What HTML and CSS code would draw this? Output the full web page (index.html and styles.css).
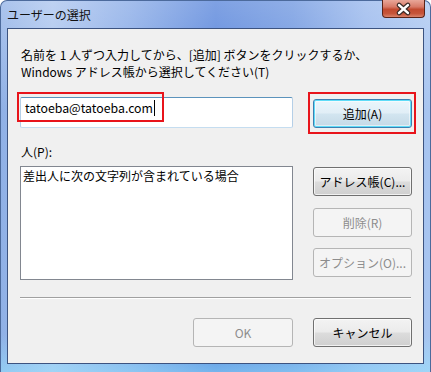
FILE: index.html
```html
<!DOCTYPE html>
<html lang="ja">
<head>
  <meta charset="UTF-8">
  <title>ユーザーの選択</title>
  <link rel="stylesheet" href="styles.css">
</head>
<body>
  <div class="window">
    <div class="titlebar">
      <span class="title">ユーザーの選択</span>
      <button class="close" aria-label="閉じる">
        <svg width="42" height="18" viewBox="0 0 42 18">
          <path d="M16.5 5 L25.5 13 M25.5 5 L16.5 13" stroke="#3b2a26" stroke-width="5" stroke-linecap="round"/>
          <path d="M16.5 5 L25.5 13 M25.5 5 L16.5 13" stroke="#fff" stroke-width="2.6" stroke-linecap="round"/>
        </svg>
      </button>
    </div>

    <div class="client">
      <p class="prompt">名前を 1 人ずつ入力してから、[追加] ボタンをクリックするか、<br>Windows アドレス帳から選択してください(T)</p>

      <div class="grid add-row">
        <div class="textbox">tatoeba@tatoeba.com<span class="caret"></span><span class="mark mark-input"></span></div>
        <button class="btn btn-default">追加(A)<span class="mark mark-btn"></span></button>
      </div>

      <label class="field-label">人(P):</label>

      <div class="grid list-row">
        <div class="listbox">差出人に次の文字列が含まれている場合</div>
        <div class="side-buttons">
          <button class="btn">アドレス帳(C)...</button>
          <button class="btn" disabled>削除(R)</button>
          <button class="btn" disabled>オプション(O)...</button>
        </div>
      </div>

      <div class="separator"></div>

      <div class="grid footer">
        <button class="btn btn-ok" disabled>OK</button>
        <button class="btn">キャンセル</button>
      </div>
    </div>
  </div>
</body>
</html>
```

FILE: styles.css
```css
* { box-sizing: border-box; margin: 0; padding: 0; }
body {
  width: 431px;
  height: 372px;
  overflow: hidden;
  font-family: "Noto Sans CJK JP", "Noto Sans", sans-serif;
  font-size: 12px;
  color: #000;
  background: #fff;
}
.window {
  height: 372px;
  display: flex;
  flex-direction: column;
  padding: 0 6px 8px 6px;
  border-radius: 7px 7px 0 0;
  border: 1px solid #4c6a9c;
  border-bottom: none;
  background:
    linear-gradient(180deg, rgba(255,255,255,0.25) 0%, rgba(255,255,255,0) 30%, rgba(255,255,255,0) 90%, rgba(150,230,255,0.5) 100%),
    linear-gradient(90deg, #8fb0e6 0%, #a9c3ee 12%, #85a8e6 30%, #5482da 50%, #6b94df 68%, #95b5ec 85%, #a8c5f0 100%);
}
.titlebar {
  height: 27px;
  display: flex;
  align-items: flex-start;
  justify-content: space-between;
}
.title {
  margin: 7px 0 0 0;
  line-height: 14px;
  font-size: 12px;
  color: #111;
}
.close {
  width: 43px;
  height: 18px;
  margin-top: -1px;
  margin-right: -1px;
  border: 1px solid #5a2318;
  border-top: none;
  border-radius: 0 0 4px 4px;
  background: linear-gradient(180deg, #e9a799 0%, #d87a68 40%, #c24a30 55%, #c6553a 80%, #d9836c 100%);
  display: flex;
  align-items: center;
  justify-content: center;
}
.close svg { display: block; }
.client {
  flex: 1;
  border: 1px solid #3c5380;
  background: #f0f0f0;
  padding: 17px 12px 0 12px;
}
.prompt {
  line-height: 17px;
  margin-left: 1px;
}
.grid {
  display: grid;
  grid-template-columns: 273px 99px;
  column-gap: 20px;
}
.add-row {
  margin-top: 17px;
  align-items: end;
}
.textbox {
  position: relative;
  height: 31px;
  background: #fff;
  border: 1px solid;
  border-color: #5c93bc #b5cfe7 #c5ddf0 #b5cfe7;
  border-radius: 2px;
  padding: 2px 0 0 4px;
  line-height: 17px;
  font-size: 12.3px;
}
.caret {
  display: inline-block;
  width: 1px;
  height: 16px;
  background: #000;
  vertical-align: -3px;
  margin-left: 1px;
}
.mark {
  position: absolute;
  border: 2px solid #e8141b;
  pointer-events: none;
}
.mark-input { left: -4px; top: -6px; width: 147px; height: 30px; }
.mark-btn { left: -6px; top: -8px; width: 108px; height: 42px; }
.btn {
  position: relative;
  height: 29px;
  font-family: inherit;
  font-size: 12px;
  color: #000;
  border: 1px solid #707070;
  border-radius: 3px;
  background: linear-gradient(180deg, #f3f3f3 0%, #ebebeb 48%, #dcdcdc 52%, #cfcfcf 100%);
  box-shadow: inset 0 0 0 1px rgba(255,255,255,0.7);
}
.btn:disabled {
  color: #8d8d8d;
  border-color: #b5b5b5;
  background: #f4f4f4;
  box-shadow: none;
}
.btn-default {
  border-color: #3c7fb1;
  box-shadow: inset 0 0 0 1px #5fdcf8, inset 0 0 0 2px rgba(255,255,255,0.5);
  background: linear-gradient(180deg, #eaf6fc 0%, #e1eef6 48%, #d2e5f0 52%, #c4d9e6 100%);
}
.field-label {
  display: block;
  margin-top: 15px;
  line-height: 17px;
  margin-left: 1px;
}
.list-row { margin-top: 6px; }
.listbox {
  height: 114px;
  background: #fff;
  border: 1px solid #828790;
  padding: 0 0 0 2px;
  line-height: 17px;
}
.side-buttons {
  display: flex;
  flex-direction: column;
  padding-top: 1px;
}
.side-buttons .btn + .btn { margin-top: 11px; }
.side-buttons .btn:nth-child(2) { margin-top: 12px; }
.separator {
  margin-top: 17px;
  height: 2px;
  border-top: 1px solid #a0a0a0;
  border-bottom: 1px solid #fff;
}
.footer { margin-top: 19px; }
.btn-ok { width: 100px; justify-self: end; }
```
